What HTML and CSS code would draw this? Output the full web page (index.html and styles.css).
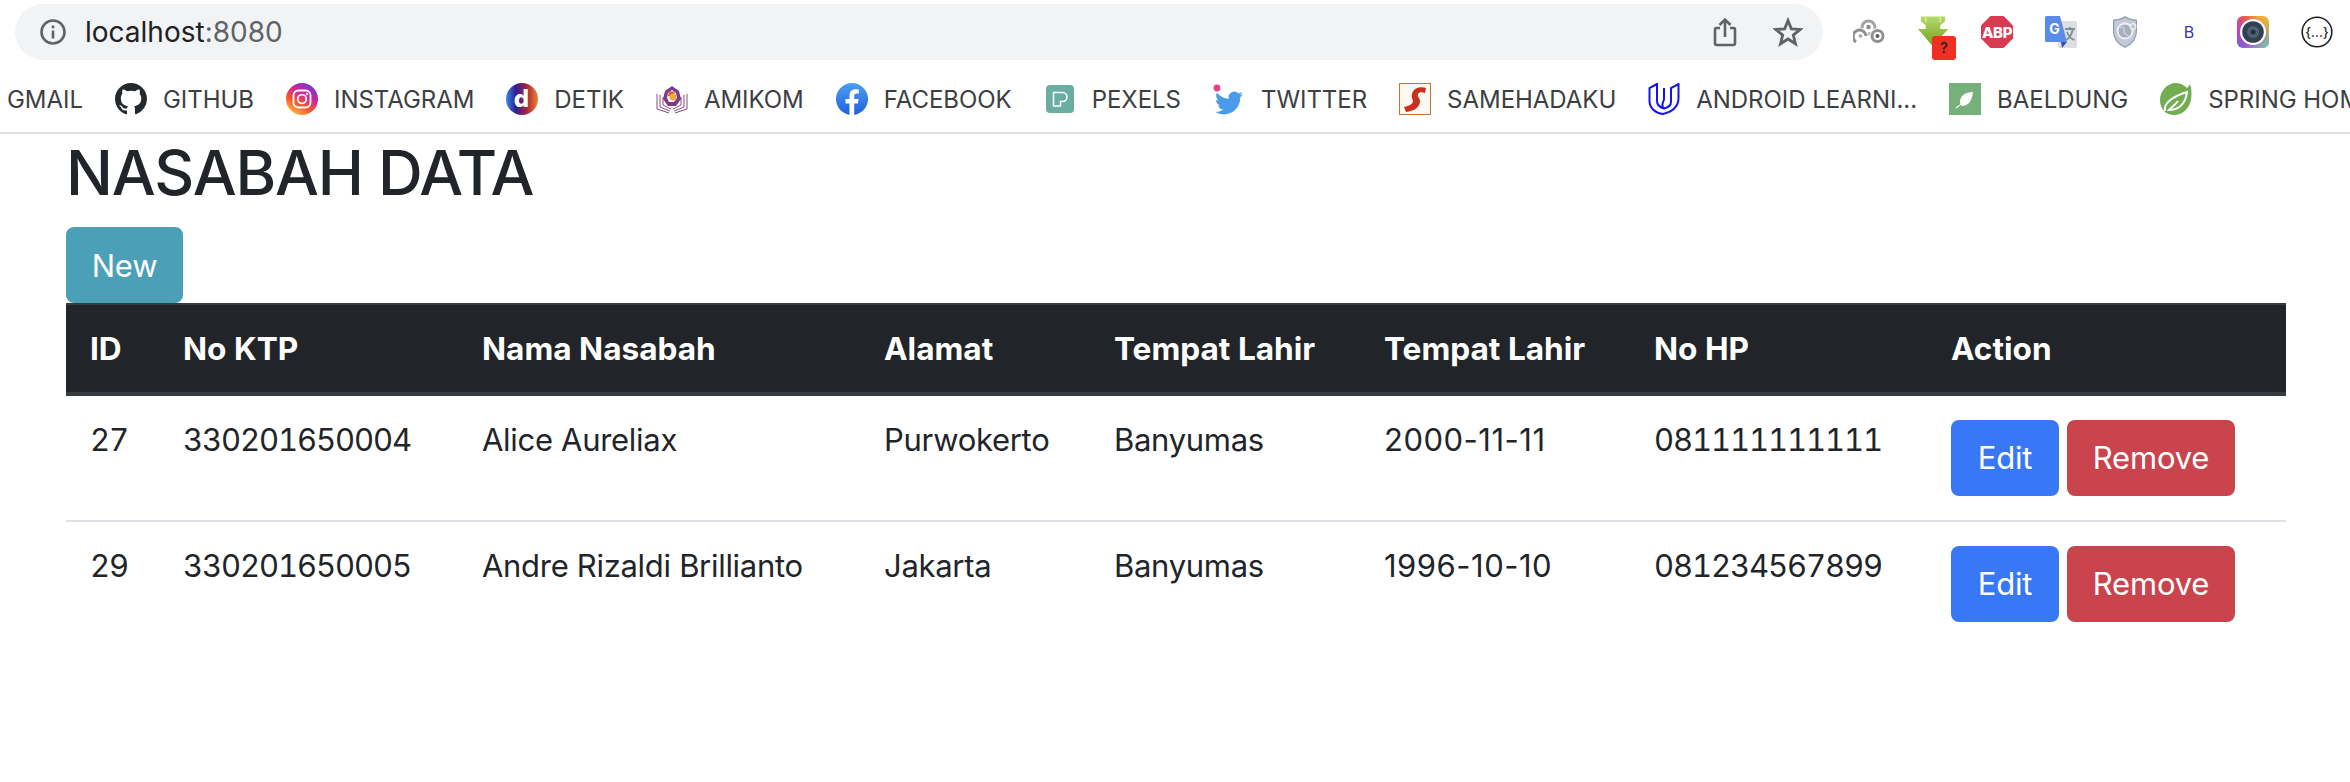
FILE: index.html
```html
<!DOCTYPE html>
<html lang="en">
<head>
<meta charset="utf-8">
<title>NASABAH DATA</title>
<link rel="stylesheet" href="styles.css">
</head>
<body>
<header class="chrome">
  <div class="toolbar">
    <div class="omnibox">
      <svg class="info" viewBox="0 0 28 28"><circle cx="14" cy="14" r="11.5" fill="none" stroke="#5f6368" stroke-width="2.6"/><rect x="12.7" y="12.5" width="2.6" height="8" fill="#5f6368"/><rect x="12.7" y="7.5" width="2.6" height="2.8" fill="#5f6368"/></svg>
      <span class="url">localhost<span class="port">:8080</span></span>
      <span class="omni-spacer"></span>
      <svg class="omni-icon share" viewBox="0 0 24 30"><path d="M7 11H3.5A1.5 1.5 0 0 0 2 12.500V26.500A1.500 1.500 0 0 0 3.500 28H20.500A1.500 1.500 0 0 0 22 26.500V12.500A1.500 1.500 0 0 0 20.500 11H17M12 20V3M6.500 8 12 2.500 17.500 8" fill="none" stroke="#5f6368" stroke-width="2.600"/></svg>
      <svg class="omni-icon star" viewBox="0 0 30 30"><path d="M15 3.500 18.300 11.800 27.200 12.400 20.300 18.100 22.500 26.800 15 22 7.500 26.800 9.700 18.100 2.800 12.400 11.700 11.800Z" fill="none" stroke="#5f6368" stroke-width="2.800" stroke-linejoin="miter"/></svg>
    </div>
    <div class="exts">
      <div class="ext"><svg class="ext-icon" viewBox="0 0 32 32"><g fill="none" stroke="#a0a2a3" stroke-width="3"><circle cx="15.500" cy="11.500" r="6.500"/></g><g fill="#fff" stroke="#fff" stroke-width="5"><circle cx="7.500" cy="20" r="5.500"/><circle cx="24.500" cy="20" r="5.500"/></g><g fill="none" stroke="#8f9192" stroke-width="3"><path d="M3 26A6.500 6.500 0 1 1 13 20"/><circle cx="24.500" cy="20" r="5.500"/></g><circle cx="15.500" cy="11" r="2.200" fill="#8c8c8c"/><circle cx="7.500" cy="20" r="1.800" fill="#a5a5a5"/><circle cx="24.500" cy="20" r="2" fill="#5c5e60"/></svg></div>
      <div class="ext"><svg class="ext-icon dl" viewBox="0 0 34 32"><defs><linearGradient id="gdl" x1="0" y1="0" x2="0" y2="1"><stop offset="0" stop-color="#b7d96b"/><stop offset="1" stop-color="#6da31f"/></linearGradient></defs><path d="M4 0H29V5L24 9V13H32L16.500 31 1 13H9V9L4 5Z" fill="url(#gdl)"/><path d="M9 0V6M24 0V6" stroke="#d8eca4" stroke-width="1.500"/></svg><span class="badge">?</span></div>
      <div class="ext"><svg class="ext-icon" viewBox="0 0 32 32"><path d="M9.400 0H22.600L32 9.400V22.600L22.600 32H9.400L0 22.600V9.400Z" fill="#db3b52"/><text class="abp" x="16" y="21.500" text-anchor="middle">ABP</text></svg></div>
      <div class="ext"><svg class="ext-icon" viewBox="0 0 32 32"><rect x="13" y="5" width="19" height="27" rx="1.500" fill="#dcdfe1"/><path d="M1.500 0H15L22 26H17L16.500 32 17 26H1.500A1.500 1.500 0 0 1 0 24.500V1.500A1.500 1.500 0 0 1 1.500 0Z" fill="#5b8bea"/><path d="M22 26H16L17 32Z" fill="#3f4db0"/><text class="tr-g" x="9.500" y="18" text-anchor="middle">G</text><path d="M20 13H30M25 11V13M28 13C26.500 19 23 23 21 24M22 16C23.500 20 26 23 29.500 24" fill="none" stroke="#7d8d98" stroke-width="1.800"/></svg></div>
      <div class="ext"><svg class="ext-icon shield" viewBox="0 0 24 32"><path d="M12 .800C15 2.800 19 4 23.400 4.200V15C23.400 23 18 28.500 12 31.200 6 28.500.600 23 .600 15V4.200C5 4 9 2.800 12 .800Z" fill="#c3cad6" stroke="#8e9ab5" stroke-width="1.200"/><circle cx="12" cy="15" r="7.500" fill="#a5afc0" stroke="#f0f1f4" stroke-width="1.800"/><path d="M7 12C10 10 12 12 11 15 10 18 14 18 15 20" fill="none" stroke="#c8cfd9" stroke-width="1.500"/><circle cx="20" cy="10.500" r="2.800" fill="#c3cad6" stroke="#f0f1f4" stroke-width="1.200"/></svg></div>
      <div class="ext"><span class="ext-b">B</span></div>
      <div class="ext"><svg class="ext-icon" viewBox="0 0 32 32"><defs><linearGradient id="gcam" x1="0" y1="1" x2="1" y2="0"><stop offset="0" stop-color="#6a6ce0"/><stop offset=".3" stop-color="#c43fc0"/><stop offset=".6" stop-color="#e8584c"/><stop offset=".8" stop-color="#f0a23a"/><stop offset="1" stop-color="#e8c645"/></linearGradient><linearGradient id="gcam2" x1="0" y1="0" x2="1" y2="1"><stop offset=".55" stop-color="#6ad5c0" stop-opacity="0"/><stop offset="1" stop-color="#60dcc0"/></linearGradient></defs><rect width="32" height="32" rx="6" fill="url(#gcam)"/><rect width="32" height="32" rx="6" fill="url(#gcam2)"/><circle cx="16" cy="16" r="13" fill="#fff"/><circle cx="16" cy="16" r="10.800" fill="#32404f"/><circle cx="16" cy="16" r="6" fill="#4c6278"/><circle cx="16" cy="16" r="2.500" fill="#26303b"/></svg></div>
      <div class="ext"><svg class="ext-icon" viewBox="0 0 32 32"><circle cx="16" cy="16" r="14.800" fill="#fff" stroke="#222" stroke-width="1.600"/><text class="json" x="16" y="20.500" text-anchor="middle">{...}</text></svg></div>
    </div>
  </div>
  <nav class="bookmarks">
    <span class="bm"><span class="bm-text">GMAIL</span></span>
    <span class="bm"><svg class="bm-icon" viewBox="0 0 16 16"><path fill="#24292e" d="M8 0C3.580 0 0 3.580 0 8c0 3.540 2.290 6.530 5.470 7.590.4.070.55-.17.55-.38 0-.19-.01-.82-.01-1.490-2.010.37-2.530-.49-2.690-.94-.09-.23-.48-.94-.82-1.130-.28-.15-.68-.52-.01-.53.63-.01 1.080.58 1.230.82.72 1.210 1.870.87 2.330.66.07-.52.28-.87.51-1.070-1.780-.2-3.640-.89-3.640-3.950 0-.87.31-1.590.82-2.150-.08-.2-.36-1.020.08-2.120 0 0 .67-.21 2.200.82.64-.18 1.320-.27 2-.27.68 0 1.360.09 2 .27 1.530-1.040 2.200-.82 2.200-.82.44 1.100.16 1.920.08 2.120.51.56.82 1.270.82 2.150 0 3.070-1.870 3.750-3.650 3.950.29.25.54.73.54 1.480 0 1.070-.01 1.930-.01 2.200 0 .21.15.46.55.38A8.013 8.013 0 0 0 16 8c0-4.420-3.580-8-8-8z"/></svg><span class="bm-text">GITHUB</span></span>
    <span class="bm"><svg class="bm-icon" viewBox="0 0 32 32"><defs><linearGradient id="gig" x1=".2" y1="1" x2=".8" y2="0"><stop offset="0" stop-color="#fdc33f"/><stop offset=".35" stop-color="#f4552f"/><stop offset=".65" stop-color="#d4239c"/><stop offset="1" stop-color="#5a3fd6"/></linearGradient></defs><circle cx="16" cy="16" r="16" fill="url(#gig)"/><rect x="7.500" y="7.500" width="17" height="17" rx="5" fill="none" stroke="#fff" stroke-width="1.800"/><circle cx="16" cy="16" r="4.300" fill="none" stroke="#fff" stroke-width="1.800"/><circle cx="21" cy="11" r="1.200" fill="#fff"/></svg><span class="bm-text">INSTAGRAM</span></span>
    <span class="bm"><svg class="bm-icon" viewBox="0 0 32 32"><defs><linearGradient id="gdt" x1="0" y1="0" x2="1" y2="0"><stop offset="0" stop-color="#3c8be0"/><stop offset=".3" stop-color="#2a1f95"/><stop offset=".65" stop-color="#a8253c"/><stop offset="1" stop-color="#f0842c"/></linearGradient></defs><circle cx="16" cy="16" r="16" fill="url(#gdt)"/><text class="detik" x="15.500" y="24" text-anchor="middle">d</text></svg><span class="bm-text">DETIK</span></span>
    <span class="bm"><svg class="bm-icon" viewBox="0 0 32 32"><g fill="none" stroke="#8a4a80" stroke-width="1"><path d="M1 11V26L13 30M4 12V24L14 28M7 14V22L15 26M31 11V26L19 30M28 12V24L18 28M25 14V22L17 26"/></g><path d="M16 3 23 8 25 16 20 23 12 23 7 16 9 8Z" fill="#7d3a86"/><path d="M16 7 20 10 21 15 18 19 13 19 11 15 12 10Z" fill="#fff"/><path d="M13 8 19 9 17 13 12 13Z" fill="#c3643b"/><circle cx="17" cy="14" r="3.500" fill="#f0a83a"/></svg><span class="bm-text">AMIKOM</span></span>
    <span class="bm"><svg class="bm-icon" viewBox="0 0 32 32"><defs><linearGradient id="gfb" x1="0" y1="0" x2="0" y2="1"><stop offset="0" stop-color="#4aa0f5"/><stop offset="1" stop-color="#2060dc"/></linearGradient></defs><circle cx="16" cy="16" r="16" fill="url(#gfb)"/><path d="M13.500 32V20.500H9.500V16H13.500V12.500C13.500 8.500 15.800 6.300 19.500 6.300 21.200 6.300 22.800 6.600 22.800 6.600V10.500H20.700C18.800 10.500 18.200 11.700 18.200 12.900V16H22.600L21.900 20.500H18.200V32Z" fill="#fff"/></svg><span class="bm-text">FACEBOOK</span></span>
    <span class="bm"><svg class="bm-icon" viewBox="0 0 32 32"><rect x="2" y="2" width="28" height="28" rx="4" fill="#6aaea2"/><path d="M9.500 9.500H18.500A4.500 4.500 0 0 1 18.500 18.500H16.500V23H9.500Z" fill="none" stroke="#fff" stroke-width="1.500"/></svg><span class="bm-text">PEXELS</span></span>
    <span class="bm"><svg class="bm-icon" viewBox="0 0 32 32"><g transform="translate(2 6) scale(1.170)"><path fill="#4c9beb" d="M23.953 4.570a10 10 0 0 1-2.825.775 4.958 4.958 0 0 0 2.163-2.723c-.951.555-2.005.959-3.127 1.184a4.920 4.920 0 0 0-8.384 4.482C7.690 8.095 4.067 6.130 1.640 3.162a4.822 4.822 0 0 0-.666 2.475c0 1.710.87 3.213 2.188 4.096a4.904 4.904 0 0 1-2.228-.616v.06a4.923 4.923 0 0 0 3.946 4.827 4.996 4.996 0 0 1-2.212.085 4.936 4.936 0 0 0 4.604 3.417 9.867 9.867 0 0 1-6.102 2.105c-.39 0-.779-.023-1.170-.067a13.995 13.995 0 0 0 7.557 2.209c9.053 0 13.998-7.496 13.998-13.985 0-.21 0-.42-.015-.63A9.935 9.935 0 0 0 24 4.590z"/></g><circle cx="4" cy="5" r="3.400" fill="#e83e8c"/></svg><span class="bm-text">TWITTER</span></span>
    <span class="bm"><svg class="bm-icon" viewBox="0 0 32 32"><rect x=".5" y=".5" width="31" height="31" fill="#fdf8f2" stroke="#c3762f"/><path d="M27 5C20 3 14 6 13 11 12 15 14 16 14 18 14 21 10 23 5 24L7 29C15 28 20 25 21 19 21.500 15 18 14 19 11 20 9 23 9 26 10Z" fill="#c8301c"/></svg><span class="bm-text">SAMEHADAKU</span></span>
    <span class="bm"><svg class="bm-icon" viewBox="0 0 32 32"><path d="M9 1 1.500 5V18C1.500 25 7 30 15 31 23 29 30.500 24 30.500 15V1L23 5V19C23 22 20 24.500 16 25.500 12 24.500 9 22 9 18ZM9 18C9 22 12 24 16 25.500M16 25.500C12 22 16 19 16 16V5" fill="none" stroke="#1414ee" stroke-width="2"/></svg><span class="bm-text">ANDROID LEARNI...</span></span>
    <span class="bm"><svg class="bm-icon" viewBox="0 0 32 32"><rect width="32" height="32" fill="#76b07a"/><path d="M24 9C16 9 11 13 11 19 11 21 12 22 13 23 19 23 23 18 24 9Z" fill="#fff"/><path d="M7 25C10 23 13 21 16 17" fill="none" stroke="#fff" stroke-width="1.200"/></svg><span class="bm-text">BAELDUNG</span></span>
    <span class="bm"><svg class="bm-icon" viewBox="0 0 32 32"><path d="M30 1C31.500 5 32 11 31 17 29 26 22 32 14 32 6 32 0 26 0 17 0 8 7 0 16 0 21 0 25 3 27 5 28 4 29 3 30 1Z" fill="#72ad51"/><path d="M5 28C3 20 14 13 27 9 26 18 21 27 9 27 12 24 15 22 18 18" fill="none" stroke="#fff" stroke-width="2"/></svg><span class="bm-text">SPRING HOME</span></span>
  </nav>
</header>
<main class="page">
  <h1 class="title">NASABAH DATA</h1>
  <a class="btn btn-new">New</a>
  <table class="data">
    <colgroup>
      <col class="c-id"><col class="c-ktp"><col class="c-nama"><col class="c-alamat"><col class="c-tempat"><col class="c-tempat"><col class="c-hp"><col class="c-action">
    </colgroup>
    <thead>
      <tr><th>ID</th><th>No KTP</th><th>Nama Nasabah</th><th>Alamat</th><th>Tempat Lahir</th><th>Tempat Lahir</th><th>No HP</th><th>Action</th></tr>
    </thead>
    <tbody>
      <tr><td class="num">27</td><td class="num">330201650004</td><td>Alice Aureliax</td><td>Purwokerto</td><td>Banyumas</td><td class="date">2000-11-11</td><td class="num">081111111111</td><td><div class="actions"><a class="btn btn-edit">Edit</a><a class="btn btn-remove">Remove</a></div></td></tr>
      <tr><td class="num">29</td><td class="num">330201650005</td><td>Andre Rizaldi Brillianto</td><td>Jakarta</td><td>Banyumas</td><td class="date">1996-10-10</td><td class="num">081234567899</td><td><div class="actions"><a class="btn btn-edit">Edit</a><a class="btn btn-remove">Remove</a></div></td></tr>
    </tbody>
  </table>
</main>
</body>
</html>
```
FILE: styles.css
```css
* { box-sizing: border-box; }
html, body { margin: 0; padding: 0; }
body {
  width: 2350px;
  height: 782px;
  overflow: hidden;
  background: #fff;
  color: #212529;
  font-family: Inter, "Liberation Sans", sans-serif;
}

.chrome { height: 134px; border-bottom: 2px solid #dedfe0; overflow: hidden; }
.toolbar { display: flex; height: 66px; padding: 4px 0 0 15px; }
.omnibox {
  width: 1808px;
  height: 56px;
  flex: none;
  display: flex;
  align-items: center;
  background: #f1f3f4;
  border-radius: 28px;
  padding: 0 20px 0 24px;
}
.info { width: 28px; height: 28px; margin-right: 18px; }
.url { font-size: 28px; color: #202124; }
.port { color: #5f6368; }
.omni-spacer { flex: 1; }
.omni-icon { display: block; }
.share { width: 24px; height: 30px; margin-right: 36px; }
.star { width: 30px; height: 30px; }
.exts { display: flex; margin-left: 14px; }
.ext {
  position: relative;
  width: 64px;
  height: 32px;
  margin-top: 12px;
  display: flex;
  align-items: center;
  justify-content: center;
}
.ext-icon { width: 32px; height: 32px; display: block; }
.ext-icon.shield { width: 24px; }
.ext-icon.dl { width: 33px; }
.badge {
  position: absolute;
  left: 31px;
  top: 20px;
  width: 24px;
  height: 24px;
  border-radius: 3px;
  background: #ee3124;
  color: #202124;
  font-size: 15px;
  font-weight: 500;
  line-height: 24px;
  text-align: center;
}
.ext-b { font-size: 16px; color: #3a35b5; }
.abp { font-size: 15px; font-weight: 800; fill: #fff; font-family: Inter, sans-serif; letter-spacing: -.4px; }
.tr-g { font-size: 14px; font-weight: 700; fill: #fff; font-family: Inter, sans-serif; }
.json { font-size: 13px; font-weight: 500; fill: #222; font-family: Inter, sans-serif; }
.detik { font-size: 24px; font-weight: 800; fill: #fff; font-family: Inter, sans-serif; }

.bookmarks {
  display: flex;
  height: 66px;
  padding: 0 0 0 7px;
  gap: 32px;
  align-items: center;
  white-space: nowrap;
}
.bm { display: flex; align-items: center; gap: 16px; flex: none; }
.bm-icon { width: 32px; height: 32px; display: block; flex: none; }
.bm-text { font-size: 24px; letter-spacing: -.04px; color: #3c4043; }

.page { padding: 0 64px 0 66px; }
.title {
  margin: 0 0 16px;
  font-size: 62px;
  line-height: 77px;
  font-weight: 500;
  letter-spacing: -1.200px;
}
.btn {
  display: inline-flex;
  align-items: center;
  justify-content: center;
  height: 76px;
  padding: 0 24px;
  border-radius: 8px;
  font-size: 31px;
  letter-spacing: -.2px;
  color: #fff;
}
.btn-new { display: flex; width: 117px; background: #4ba0b7; }
.btn-edit { width: 108px; background: #3878f6; }
.btn-remove { width: 168px; background: #ca444d; }
.actions { display: flex; gap: 8px; }

.data {
  width: 2220px;
  table-layout: fixed;
  border-collapse: collapse;
  font-size: 31px;
}
.c-id { width: 93px; }
.c-ktp { width: 299px; }
.c-nama { width: 402px; }
.c-alamat { width: 230px; }
.c-tempat { width: 270px; }
.c-hp { width: 297px; }
.c-action { width: 359px; }
.data th {
  height: 90px;
  padding: 0 24px;
  text-align: left;
  font-size: 31.600px;
  font-weight: 700;
  background: #212529;
  color: #fff;
  border-top: 2px solid #373b3e;
  border-bottom: 4px solid #373b3e;
}
.data td {
  padding: 24px;
  line-height: 40px;
  letter-spacing: -.3px;
  vertical-align: top;
  border-bottom: 2px solid #dee2e6;
}
.data td.num { font-variant-numeric: tabular-nums; letter-spacing: -1.100px; }
.data td.date { letter-spacing: .5px; }
.data tbody tr:last-child td { border-bottom: 0; }
```
